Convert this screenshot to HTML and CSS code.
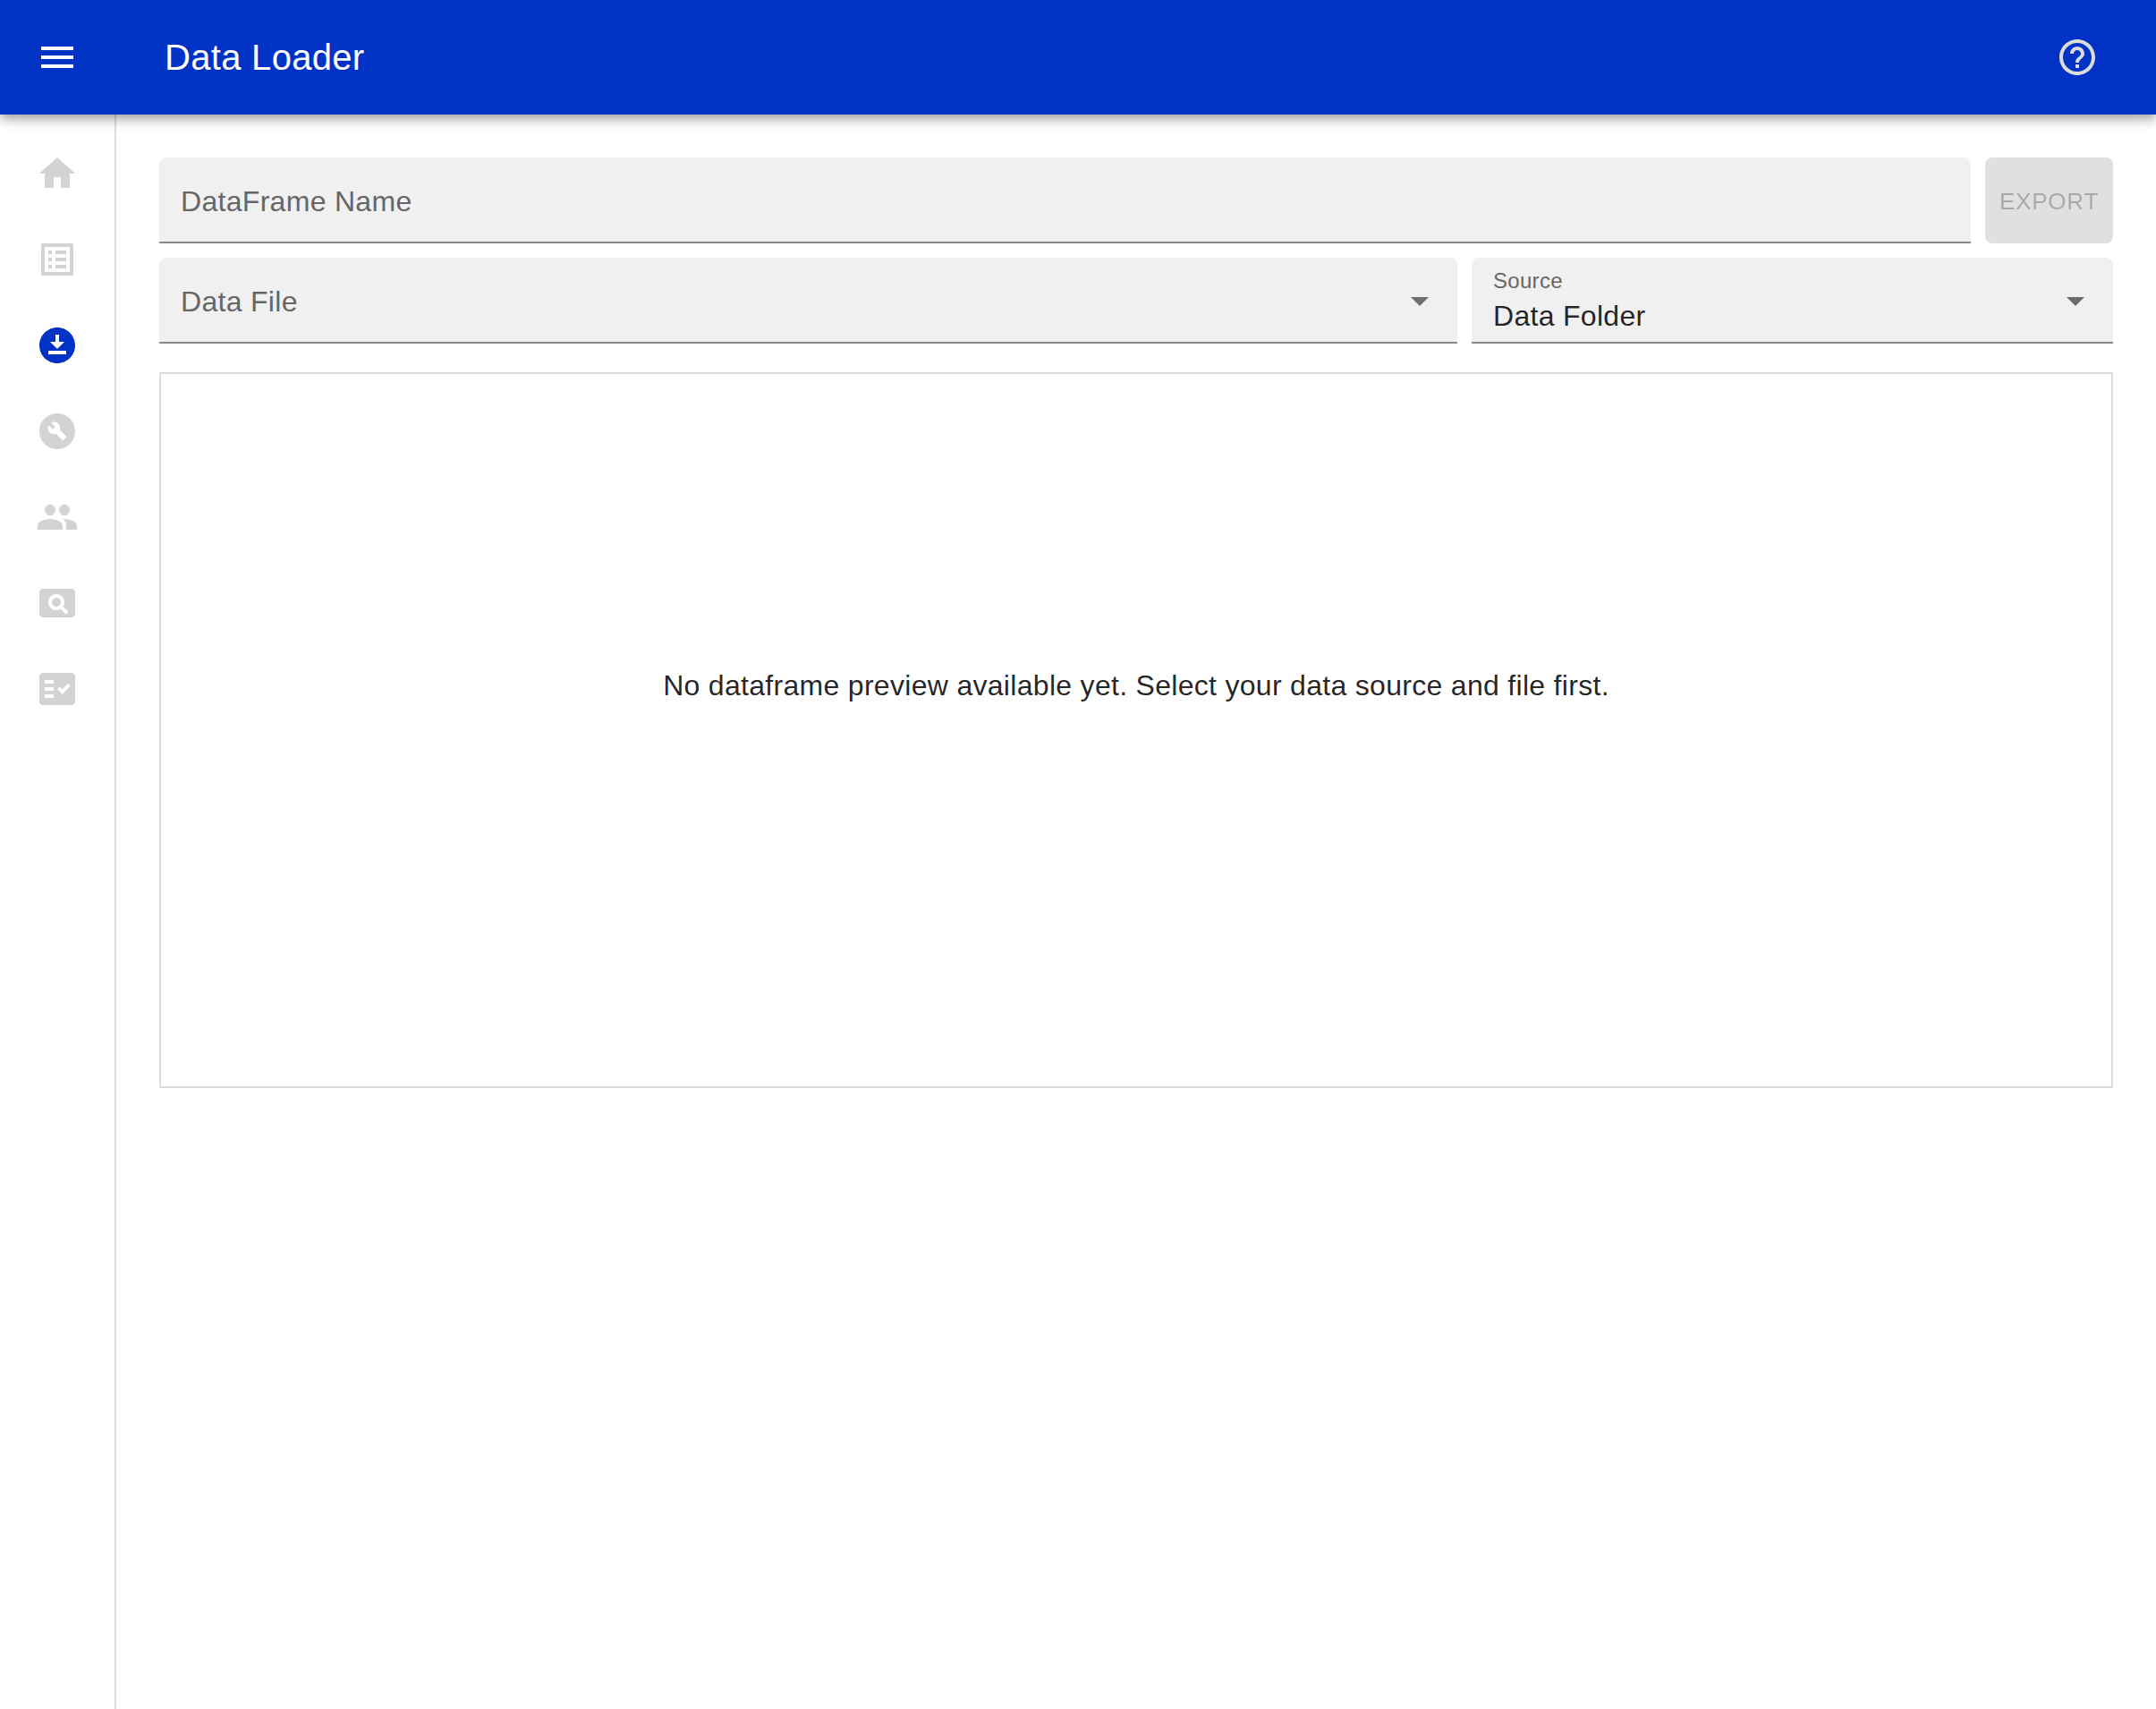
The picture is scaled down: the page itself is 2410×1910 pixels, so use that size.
FILE: index.html
```html
<!DOCTYPE html>
<html lang="en">
<head>
<meta charset="utf-8">
<title>Data Loader</title>
<link rel="stylesheet" href="styles.css">
</head>
<body>
<header class="appbar">
  <svg class="icon icon-white" viewBox="0 0 24 24"><path d="M3 18h18v-2H3v2zm0-5h18v-2H3v2zm0-7v2h18V6H3z"/></svg>
  <h1 class="title">Data Loader</h1>
  <svg class="icon icon-help" viewBox="0 0 24 24"><path d="M11 18h2v-2h-2v2zm1-16C6.48 2 2 6.48 2 12s4.48 10 10 10 10-4.48 10-10S17.52 2 12 2zm0 18c-4.41 0-8-3.59-8-8s3.59-8 8-8 8 3.59 8 8-3.59 8-8 8zm0-14c-2.21 0-4 1.79-4 4h2c0-1.1.9-2 2-2s2 .9 2 2c0 2-3 1.75-3 5h2c0-2.25 3-2.5 3-5 0-2.21-1.79-4-4-4z"/></svg>
</header>
<div class="body-row">
  <nav class="sidebar">
    <svg class="icon icon-nav" viewBox="0 0 24 24"><path d="M10 20v-6h4v6h5v-8h3L12 3 2 12h3v8z"/></svg>
    <svg class="icon icon-nav" viewBox="0 0 24 24"><path d="M19 5v14H5V5h14m1.1-2H3.9c-.5 0-.9.4-.9.9v16.2c0 .4.4.9.9.9h16.2c.4 0 .9-.5.9-.9V3.9c0-.5-.5-.9-.9-.9zM11 7h6v2h-6V7zm0 4h6v2h-6v-2zm0 4h6v2h-6zM7 7h2v2H7zm0 4h2v2H7zm0 4h2v2H7z"/></svg>
    <svg class="icon icon-active" viewBox="0 0 24 24"><path d="M12 2C6.49 2 2 6.49 2 12s4.49 10 10 10 10-4.49 10-10S17.51 2 12 2zm-1 8V6h2v4h3l-4 4-4-4h3zm6 7H7v-2h10v2z"/></svg>
    <svg class="icon icon-nav" viewBox="0 0 24 24"><path d="M12 2C6.48 2 2 6.48 2 12c0 5.52 4.48 10 10 10s10-4.48 10-10C22 6.48 17.52 2 12 2zm4.9 13.49l-1.4 1.4c-.2.2-.51.2-.71 0l-3.41-3.41c-1.22.43-2.64.17-3.62-.81-1.11-1.11-1.3-2.79-.59-4.1l2.35 2.35 1.41-1.41-2.35-2.34c1.32-.71 2.99-.52 4.1.59.98.98 1.24 2.4.81 3.62l3.41 3.41c.19.19.19.51 0 .7z"/></svg>
    <svg class="icon icon-nav" viewBox="0 0 24 24"><path d="M16 11c1.66 0 2.99-1.34 2.99-3S17.66 5 16 5c-1.66 0-3 1.34-3 3s1.34 3 3 3zm-8 0c1.66 0 2.99-1.34 2.99-3S9.66 5 8 5C6.34 5 5 6.34 5 8s1.34 3 3 3zm0 2c-2.33 0-7 1.17-7 3.5V19h14v-2.5c0-2.33-4.67-3.5-7-3.5zm8 0c-.29 0-.62.02-.97.05 1.16.84 1.97 1.97 1.97 3.45V19h6v-2.5c0-2.33-4.67-3.5-7-3.5z"/></svg>
    <svg class="icon icon-nav" viewBox="0 0 24 24"><path d="M11.5 9C10.12 9 9 10.12 9 11.5s1.12 2.5 2.5 2.5 2.5-1.12 2.5-2.5S12.88 9 11.5 9zM20 4H4c-1.1 0-2 .9-2 2v12c0 1.1.9 2 2 2h16c1.1 0 2-.9 2-2V6c0-1.1-.9-2-2-2zm-3.21 14.21l-2.91-2.91c-.69.44-1.51.7-2.38.7C9 16 7 14 7 11.5S9 7 11.5 7 16 9 16 11.5c0 .88-.26 1.69-.7 2.39l2.91 2.9-1.42 1.42z"/></svg>
    <svg class="icon icon-nav" viewBox="0 0 24 24"><path fill-rule="evenodd" d="M20 3H4c-1.1 0-2 .9-2 2v14c0 1.1.9 2 2 2h16c1.1 0 2-.9 2-2V5c0-1.1-.9-2-2-2zM10 17H5v-2h5v2zm0-4H5v-2h5v2zm0-4H5V7h5v2zm4.82 6L12 12.16l1.41-1.41 1.41 1.42L17.99 9l1.42 1.42L14.82 15z"/></svg>
  </nav>
  <main class="content">
    <div class="row">
      <div class="field field-grow"><span class="placeholder">DataFrame Name</span></div>
      <button class="export" type="button" disabled>Export</button>
    </div>
    <div class="row">
      <div class="field field-file">
        <span class="placeholder">Data File</span>
        <svg class="icon icon-arrow" viewBox="0 0 24 24"><path d="M7 10l5 5 5-5z"/></svg>
      </div>
      <div class="field field-source">
        <div class="stack">
          <span class="small-label">Source</span>
          <span class="value">Data Folder</span>
        </div>
        <svg class="icon icon-arrow" viewBox="0 0 24 24"><path d="M7 10l5 5 5-5z"/></svg>
      </div>
    </div>
    <section class="preview">
      <p class="preview-text">No dataframe preview available yet. Select your data source and file first.</p>
    </section>
  </main>
</div>
</body>
</html>
```
FILE: styles.css
```css
* { box-sizing: border-box; }
html, body { margin: 0; padding: 0; height: 100%; }
body {
  display: flex;
  flex-direction: column;
  height: 1910px;
  background: #fff;
  font-family: "Liberation Sans", Arial, sans-serif;
  overflow: hidden;
}
.icon { display: block; width: 48px; height: 48px; flex: none; }
.icon-white { fill: #fff; }
.icon-help { fill: #dcdcdc; margin-left: auto; }
.icon-nav { fill: #d3d3d3; }
.icon-active { fill: #0033c5; }
.icon-arrow { fill: rgba(0, 0, 0, 0.54); margin-left: auto; position: relative; top: 1px; }

.appbar {
  display: flex;
  align-items: center;
  height: 128px;
  padding: 0 64px 0 40px;
  background: #0033c5;
  color: #fff;
  position: relative;
  z-index: 2;
  box-shadow: 0 4px 8px -2px rgba(0,0,0,.2), 0 8px 10px 0 rgba(0,0,0,.14), 0 2px 20px 0 rgba(0,0,0,.12);
}
.title {
  margin: 0 0 0 96px;
  font-size: 40px;
  font-weight: 400;
  line-height: 1.6;
  letter-spacing: 0.3px;
}
.body-row { display: flex; flex: 1; min-height: 0; }
.sidebar {
  width: 130px;
  flex: none;
  display: flex;
  flex-direction: column;
  gap: 48px;
  padding: 42px 0 0 40px;
  border-right: 2px solid #ddd;
}
.content {
  flex: 1;
  min-width: 0;
  display: flex;
  flex-direction: column;
  gap: 16px;
  padding: 48px 48px 0;
}
.row { display: flex; gap: 16px; }
.field {
  display: flex;
  align-items: center;
  height: 96px;
  padding: 0 18px 0 24px;
  background: #f0f0f0;
  border-bottom: 2px solid #888;
  border-radius: 8px 8px 0 0;
  font-size: 32px;
  letter-spacing: 0.3px;
}
.field-grow { flex: 1; }
.field-file { flex: 0 0 1451px; }
.field-source { flex: 1; }
.placeholder { color: #666; position: relative; top: 2px; }
.stack { display: flex; flex-direction: column; padding-top: 1px; }
.small-label { font-size: 24px; line-height: 28px; color: #666; }
.value { font-size: 32px; line-height: 38px; margin-top: 6px; color: rgba(0, 0, 0, 0.87); }
.export {
  width: 143px;
  height: 96px;
  padding: 2px 0 0;
  border: 0;
  border-radius: 8px;
  background: #e0e0e0;
  color: rgba(0, 0, 0, 0.26);
  font-family: "Liberation Sans", Arial, sans-serif;
  font-size: 26px;
  letter-spacing: 0.8px;
  text-transform: uppercase;
}
.preview {
  height: 800px;
  margin-top: 16px;
  display: flex;
  align-items: center;
  justify-content: center;
  padding-bottom: 100px;
  border: 2px solid #ddd;
}
.preview-text {
  margin: 0;
  font-size: 32px;
  letter-spacing: 0.3px;
  color: rgba(0, 0, 0, 0.87);
}
```
